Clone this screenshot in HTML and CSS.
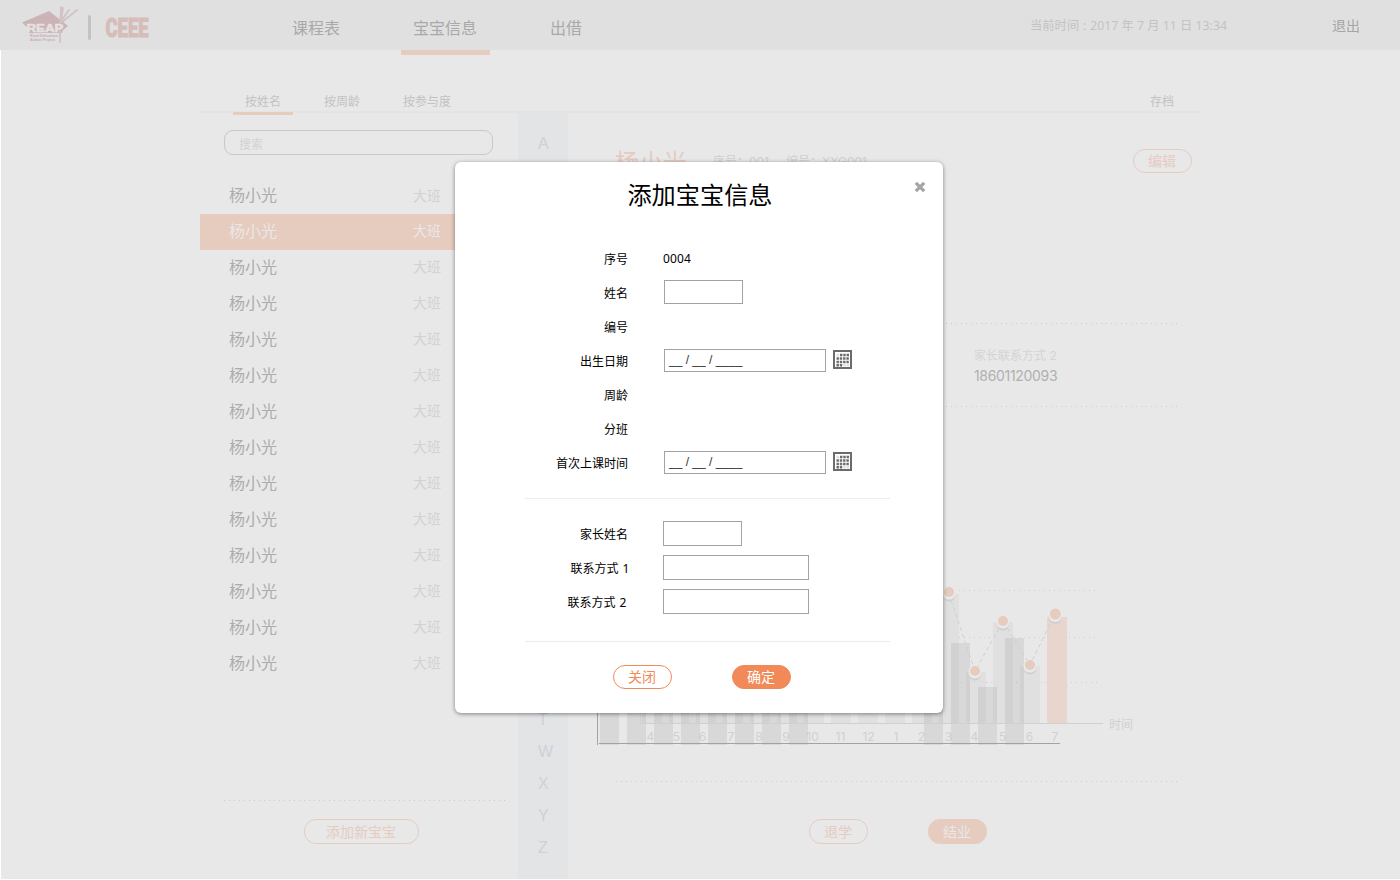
FILE: index.html
```html
<!DOCTYPE html>
<html lang="zh-CN">
<head>
<meta charset="utf-8">
<title>宝宝信息</title>
<link rel="stylesheet" href="styles.css">
</head>
<body>
<div class="page">
  <header class="topbar">
    <svg class="logo" viewBox="20 0 60 50" width="60" height="50">
      <path class="logo-cap" d="M22 22.5L49 11L68 26L63 30L62 33L29 33L28 28Z"/>
      <g class="logo-hand"><path d="M60 42V28L61 7M61 21L69 10M62 22L77 10M61 20L63 8"/></g>
      <text class="logo-name" x="26.500" y="32" textLength="37" lengthAdjust="spacingAndGlyphs">REAP</text>
      <text class="logo-sub" x="30" y="36.500" textLength="28" lengthAdjust="spacingAndGlyphs">Rural Education</text>
      <text class="logo-sub" x="30" y="40.500" textLength="25" lengthAdjust="spacingAndGlyphs">Action Project</text>
    </svg>
    <span class="logo-bar"></span>
    <svg class="ceee" viewBox="0 0 44 20" width="44" height="20"><text x="0.500" y="19" textLength="43" lengthAdjust="spacingAndGlyphs">CEEE</text></svg>
    <nav class="nav">
      <a class="nav-item">课程表</a>
      <a class="nav-item active">宝宝信息</a>
      <a class="nav-item">出借</a>
    </nav>
    <span class="clock">当前时间<span class="colon">:</span>2017 年 7 月 11 日 13:34</span>
    <a class="logout">退出</a>
  </header>
  <div class="content">
    <div class="tabs">
      <a class="tab active">按姓名</a>
      <a class="tab">按周龄</a>
      <a class="tab">按参与度</a>
      <a class="archive">存档</a>
    </div>
    <div class="columns">
      <section class="list">
        <div class="search">搜索</div>
        <ul class="babies">
          <li><b>杨小光</b><i>大班</i></li>
          <li class="selected"><b>杨小光</b><i>大班</i></li>
          <li><b>杨小光</b><i>大班</i></li>
          <li><b>杨小光</b><i>大班</i></li>
          <li><b>杨小光</b><i>大班</i></li>
          <li><b>杨小光</b><i>大班</i></li>
          <li><b>杨小光</b><i>大班</i></li>
          <li><b>杨小光</b><i>大班</i></li>
          <li><b>杨小光</b><i>大班</i></li>
          <li><b>杨小光</b><i>大班</i></li>
          <li><b>杨小光</b><i>大班</i></li>
          <li><b>杨小光</b><i>大班</i></li>
          <li><b>杨小光</b><i>大班</i></li>
          <li><b>杨小光</b><i>大班</i></li>
        </ul>
        <div class="dots list-dots"></div>
        <button class="pill faded add">添加新宝宝</button>
      </section>
      <div class="letters">
        <span>A</span><span>B</span><span>C</span><span>D</span><span>E</span><span>F</span><span>G</span><span>H</span><span>J</span><span>K</span><span>L</span><span>M</span><span>N</span><span>O</span><span>P</span><span>Q</span><span>R</span><span>S</span><span>T</span><span>W</span><span>X</span><span>Y</span><span>Z</span>
      </div>
      <section class="detail">
        <div class="detail-head">
          <h2>杨小光</h2>
          <span class="meta">序号：001</span>
          <span class="meta">编号：XXG001</span>
          <button class="pill faded edit">编辑</button>
        </div>
        <div class="contact">
          <div class="contact-label">家长联系方式 2</div>
          <div class="contact-phone">18601120093</div>
        </div>
        <svg class="chart" viewBox="590 570 560 180" width="560" height="180">
          <g class="grid">
            <path d="M644 590.5H1096M644 637.5H1097M646 682.5H1099"/>
          </g>
          <g class="bar-light">
            <path d="M642 700h20v23h-20zM669 700h20v23h-20zM696 700h20v23h-20zM723 700h20v23h-20zM750 700h20v23h-20zM777 700h20v23h-20zM804 700h20v23h-20zM831 700h20v23h-20zM858 700h20v23h-20zM885 700h20v23h-20zM912 700h20v23h-20zM939 594h20v129h-20zM966 672h20v51h-20zM993 622h20v101h-20zM1020 666h20v57h-20z"/>
          </g>
          <rect class="bar-hot" x="1047" y="617" width="20" height="106"/>
          <g class="axis-text">
            <text x="650.500" y="741">4</text><text x="676.500" y="741">5</text><text x="702.500" y="741">6</text><text x="731" y="741">7</text><text x="759" y="741">8</text><text x="786" y="741">9</text><text x="812.500" y="741">10</text><text x="840.500" y="741">11</text><text x="868.500" y="741">12</text><text x="896" y="741">1</text><text x="921.500" y="741">2</text><text x="948.500" y="741">3</text><text x="974.500" y="741">4</text><text x="1002.500" y="741">5</text><text x="1029.500" y="741">6</text><text x="1055" y="741">7</text>
            <text class="axis-title" x="1121" y="729">时间</text>
          </g>
          <g class="bar-dark">
            <path d="M600 700h19v45h-19zM627 700h19v45h-19zM654 700h19v45h-19zM681 700h19v45h-19zM708 700h19v45h-19zM735 700h19v45h-19zM762 700h19v45h-19zM789 700h19v45h-19zM924 700h19v45h-19zM951 643h19v102h-19zM978 687h19v58h-19zM1005 638h19v107h-19z"/>
          </g>
          <path class="axis-light" d="M640.5 700V724M641 723.5H1103"/>
          <path class="axis-dark" d="M597.5 700V745M599 743.5H1060"/>
          <path class="trend" d="M949 594L975 671L1003 621L1030 665L1055 614"/>
          <g class="dot-shadow"><circle cx="949" cy="595" r="6.5"/><circle cx="975" cy="674" r="6.5"/><circle cx="1003" cy="624" r="6.5"/><circle cx="1030" cy="668" r="6.5"/><circle cx="1055.3" cy="617" r="7"/></g>
          <g class="dot-ring"><circle cx="949" cy="593" r="6.6"/><circle cx="975" cy="672" r="6.6"/><circle cx="1003" cy="622" r="6.6"/><circle cx="1030" cy="666" r="6.6"/><circle cx="1055.3" cy="615" r="7"/></g>
          <g class="dot"><circle cx="949" cy="592" r="5"/><circle cx="975" cy="671" r="5"/><circle cx="1003" cy="621" r="5"/><circle cx="1030" cy="665" r="5"/><circle cx="1055.3" cy="614" r="5.5"/></g>
        </svg>
        <div class="dots detail-dots"></div>
        <div class="detail-actions">
          <button class="pill faded">退学</button>
          <button class="pill faded solid">结业</button>
        </div>
      </section>
    </div>
  </div>
</div>
<div class="modal">
  <svg class="close" viewBox="0 0 12 12" width="12" height="12"><path d="M1.800 1.800L10.200 10.200M10.200 1.800L1.800 10.200"/></svg>
  <h1>添加宝宝信息</h1>
  <div class="form">
    <div class="row"><label>序号</label><span class="value">0004</span></div>
    <div class="row"><label>姓名</label><span class="field short"></span></div>
    <div class="row"><label>编号</label></div>
    <div class="row"><label>出生日期</label><span class="field date">__ / __ / ____</span>
      <svg class="cal" viewBox="0 0 19 19" width="19" height="19"><rect class="cal-box" x="1" y="1" width="17" height="17"/><path class="cal-pale" d="M3.5 5H7M10.400 15.200H16"/><path class="cal-cells" d="M7 5H16M3.5 8.5H16M3.5 12H16M3.5 15.2H10"/></svg></div>
    <div class="row"><label>周龄</label></div>
    <div class="row"><label>分班</label></div>
    <div class="row"><label>首次上课时间</label><span class="field date">__ / __ / ____</span>
      <svg class="cal" viewBox="0 0 19 19" width="19" height="19"><rect class="cal-box" x="1" y="1" width="17" height="17"/><path class="cal-pale" d="M3.5 5H7M10.400 15.200H16"/><path class="cal-cells" d="M7 5H16M3.5 8.5H16M3.5 12H16M3.5 15.2H10"/></svg></div>
  </div>
  <div class="form parents">
    <div class="row"><label>家长姓名</label><span class="field short"></span></div>
    <div class="row"><label class="first">联系方式 1</label><span class="field phone"></span></div>
    <div class="row"><label class="second">联系方式 2</label><span class="field phone"></span></div>
  </div>
  <div class="modal-actions">
    <button class="pill">关闭</button>
    <button class="pill solid">确定</button>
  </div>
</div>
</body>
</html>
```
FILE: styles.css
```css
* { box-sizing: border-box; }
body {
  margin: 0;
  background: #fff;
  font-family: "Noto Sans", "Noto Sans CJK SC", sans-serif;
  font-size: 12px;
}
.page { height: 879px; overflow: hidden; }
.topbar {
  display: flex;
  align-items: center;
  height: 50px;
  background: #e0e0e0;
  padding-right: 40px;
}
.logo { margin: 0 0 0 20px; flex: none; }
.logo-cap { fill: #cbb3b6; }
.logo-hand { fill: none; stroke: #d2c2c4; stroke-width: 1.8; stroke-linecap: round; }
.logo-name { font: bold 10.5px "Liberation Sans", sans-serif; fill: #e6e2e2; stroke: #e6e2e2; stroke-width: .5; }
.logo-sub { font: bold 3.6px "Liberation Sans", sans-serif; fill: #c6aeb1; }
.logo-bar { width: 3px; height: 25px; margin: 4px 0 0 8px; border-radius: 1.5px; background: #c3c3c3; }
.ceee { margin: 5px 0 0 14px; flex: none; overflow: visible; }
.ceee text { font: 900 26px "Roboto", sans-serif; fill: #d6bdb9; stroke: #d6bdb9; stroke-width: 1; }
.nav { display: flex; margin-left: 131px; height: 50px; }
.nav-item { font-size: 16px; line-height: 24px; height: 55px; padding: 16px 12px 0; color: #a9a9a9; margin-right: 49px; white-space: nowrap; }
.nav-item.active { border-bottom: 5px solid #e6cbbf; padding-right: 13px; margin-right: 48px; }
.clock { margin-left: auto; width: 302px; font-size: 12.3px; color: #c3c3c3; white-space: nowrap; }
.colon { display: inline-block; width: 11px; text-align: center; }
.logout { font-size: 14px; color: #a5a5a5; width: 28px; }
.content { margin-left: 1px; padding-left: 199px; height: 829px; background: #e8e8e8; }
.tabs { display: flex; width: 1000px; height: 63px; padding: 41px 0 0 33px; border-bottom: 2px solid #e4e4e4; }
.tab { height: 24px; line-height: 21px; padding: 0 12px; margin-right: 19px; color: #c2c2c2; }
.tab.active { border-bottom: 3px solid #e6cbbf; }
.archive { margin: 0 26px 0 auto; line-height: 21px; color: #c2c2c2; }
.columns { display: flex; width: 1000px; height: 766px; }
.list { width: 318px; padding-top: 17px; flex: none; }
.search { width: 269px; height: 25px; margin-left: 24px; border: 1px solid #c9c9c9; border-radius: 9px; padding-left: 14px; line-height: 27px; color: #d2d2d2; }
.babies { list-style: none; margin: 23px 0 118px; padding: 0; }
.babies li { display: flex; justify-content: space-between; height: 36px; line-height: 35px; padding: 0 77px 0 29px; }
.babies b { font-weight: normal; font-size: 16px; color: #acacac; }
.babies i { font-style: normal; font-size: 14px; line-height: 34px; color: #d2d2d2; }
.babies li:first-child i { line-height: 36px; }
.babies .selected { background: #e6cbbf; }
.babies .selected b, .babies .selected i { color: #ebe7e6; }
.dots { height: 1px; background: repeating-linear-gradient(90deg, #cbcbcb 0 1px, transparent 1px 5px); }
.list-dots { width: 282px; margin-left: 24px; }
.pill {
  display: block;
  width: 59px;
  height: 24px;
  padding: 0 1px 2px 0;
  border: 1px solid #f18a58;
  border-radius: 12px;
  background: transparent;
  font: 14px/20px "Noto Sans CJK SC", sans-serif;
  color: #f18a58;
}
.pill.solid { background: #f18a58; color: #fff; }
.pill.faded { border-color: #e6cbbf; color: #e6cbbf; }
.pill.faded.solid { background: #e6cbbf; color: #ebe7e6; }
.pill.add { width: 115px; height: 25px; margin: 18px 0 0 104px; }
.letters { display: flex; flex-direction: column; width: 50px; flex: none; padding: 15px 0 0 20px; background: #e2e4e6; color: #cfd0d9; font: 16px/32px "Liberation Sans", sans-serif; }
.detail { flex: 1; min-width: 0; }
.detail-head { display: flex; height: 96px; padding: 30px 8px 0 47px; color: #cecece; }
.detail-head h2 { margin: 0 26px 0 0; font: 24px/35px "Noto Sans CJK SC", sans-serif; color: #e6cbbf; }
.meta { line-height: 38px; margin-right: 17px; font-family: "Inter", "Noto Sans CJK SC", sans-serif; }
.edit { margin: 6px 0 0 auto; }
.contact {
  width: 563px;
  height: 84px;
  margin: 114px 0 163px 48px;
  padding: 24px 0 0 358px;
  background:
    repeating-linear-gradient(90deg, #cbcbcb 0 1px, transparent 1px 5px) 0 0 / 100% 1px no-repeat,
    repeating-linear-gradient(90deg, #cbcbcb 0 1px, transparent 1px 5px) 0 100% / 100% 1px no-repeat;
}
.contact-label { line-height: 18px; font-family: "Inter", "Noto Sans CJK SC", sans-serif; color: #d4d4d4; }
.contact-phone { font: 14px/22px "Inter", sans-serif; letter-spacing: -.32px; color: #b0b0b0; }
.chart { display: block; margin-left: 22px; }
.grid path { stroke: #cfcfcf; stroke-dasharray: 1 4; }
.bar-light { fill: #e0e0e0; }
.bar-dark { fill: #000; opacity: .065; }
.bar-hot { fill: #e8d5ce; }
.axis-text { font: 12px "Inter", "Noto Sans CJK SC", sans-serif; text-anchor: middle; fill: #d0d0d0; }
.axis-light { stroke: #d0d0d0; fill: none; }
.axis-dark { stroke: #a3a3a3; fill: none; }
.trend { fill: none; stroke: #d0d0d0; stroke-dasharray: 4 3; }
.dot-shadow { fill: #cfcfcf; }
.dot-ring { fill: #e9e9e9; }
.dot { fill: #e6cbbf; }
.detail-dots { width: 562px; margin: 31px 0 37px 48px; }
.detail-actions { display: flex; gap: 60px; padding-left: 241px; }
.detail-actions .pill { height: 25px; padding-bottom: 1px; }

.modal {
  position: absolute;
  left: 455px;
  top: 162px;
  width: 488px;
  height: 551px;
  border-radius: 6px;
  background: #fff;
  box-shadow: 0 1px 4px rgba(0, 0, 0, .45);
  color: #000;
}
.modal h1 { margin: 14px 0 30px; padding-left: 2px; text-align: center; font: 24.2px/36px "Noto Sans CJK SC", sans-serif; }
.close { position: absolute; right: 17px; top: 19px; }
.close path { stroke: #a5a5a5; stroke-width: 3.2; }
.form { width: 365px; height: 257px; margin-left: 70px; border-bottom: 1px solid #ececec; }
.row { display: flex; align-items: center; height: 34px; }
.row label { width: 103px; margin-right: 36px; text-align: right; flex: none; padding-bottom: 1px; }
.value { margin-left: -1px; padding-bottom: 2px; letter-spacing: .1px; }
.field { border: 1px solid #a3a3a3; height: 24px; margin-bottom: 2px; }
.short { width: 79px; }
.date { width: 162px; height: 23px; margin-bottom: 1px; padding-left: 4px; font: 12px/20px "Liberation Sans", sans-serif; color: #333; }
.cal { margin: 0 0 3px 7px; }
.cal-box { fill: #fff; stroke: #6b6b6b; stroke-width: 2; }
.cal-cells { fill: none; stroke: #6b6b6b; stroke-width: 2.4; stroke-dasharray: 2.4 .9; }
.cal-pale { fill: none; stroke: #dedede; stroke-width: 2.4; stroke-dasharray: 2.4 .9; }
.parents { height: 143px; padding-top: 18px; }
.parents .field { height: 25px; margin: 0 0 1px -1px; }
.phone { width: 146px; }
.row .first { position: relative; left: 1.5px; word-spacing: 1px; }
.row .second { position: relative; left: -1.5px; word-spacing: 1px; }
.modal-actions { display: flex; gap: 60px; padding: 23px 0 0 158px; }
```
